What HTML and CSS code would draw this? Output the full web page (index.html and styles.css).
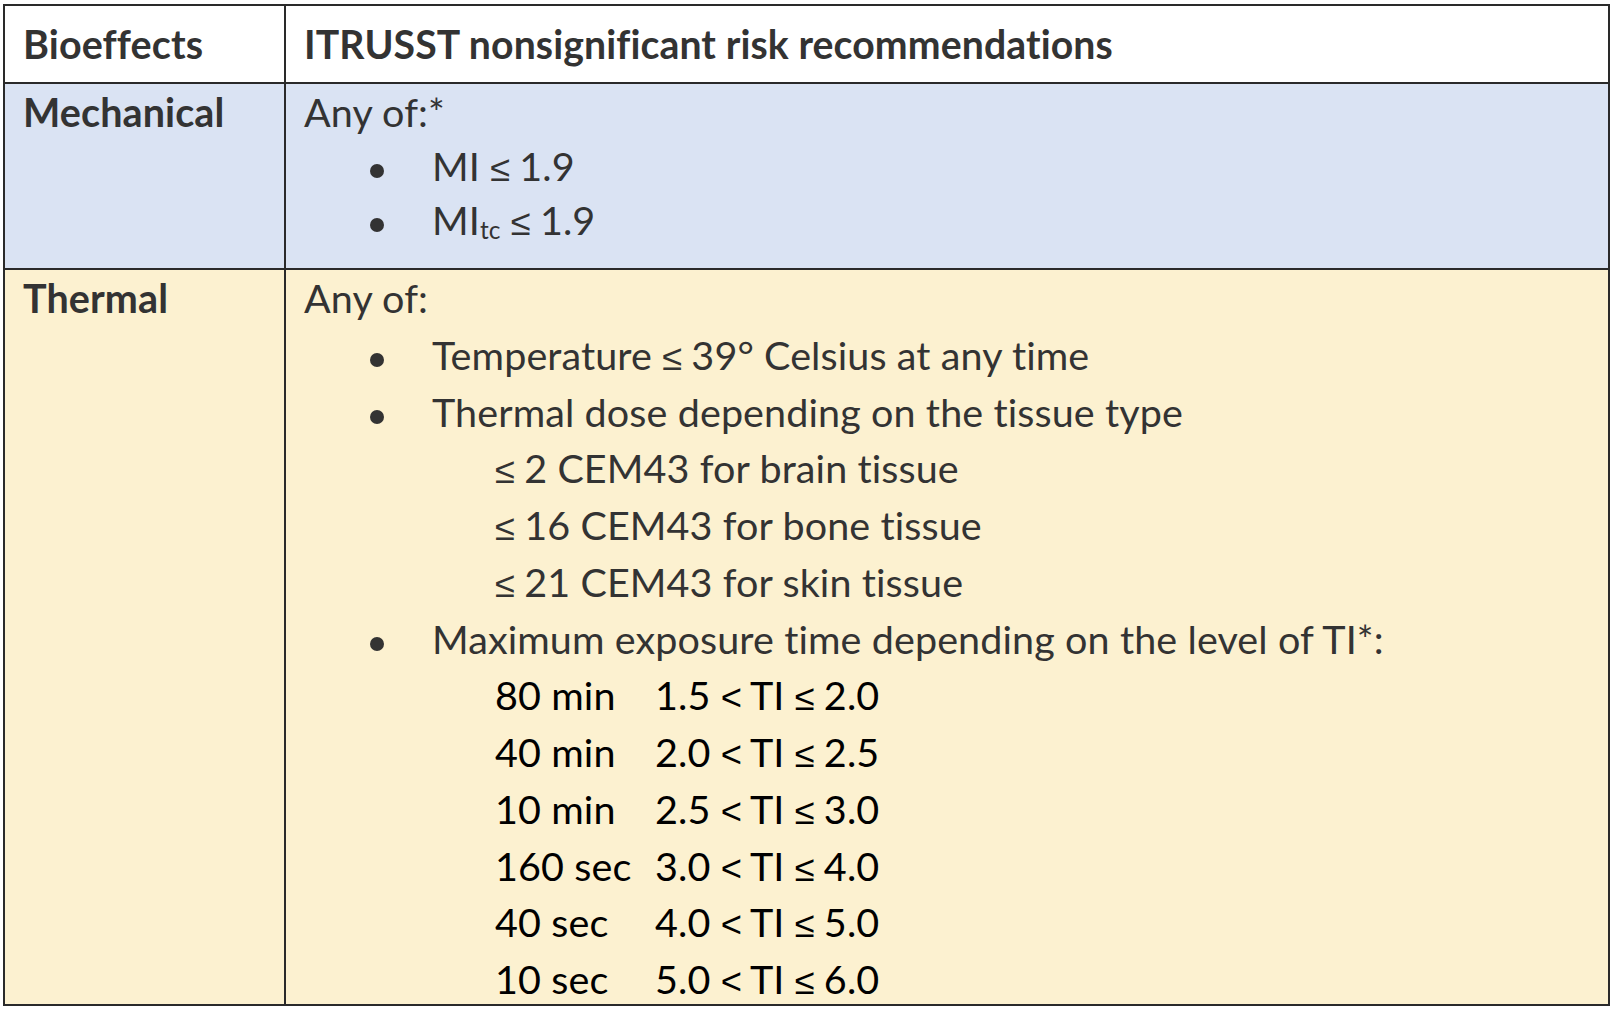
FILE: index.html
```html
<!DOCTYPE html>
<html lang="en">
<head>
<meta charset="utf-8">
<title>ITRUSST nonsignificant risk recommendations</title>
<link rel="stylesheet" href="styles.css">
</head>
<body>
<div class="table">
  <div class="cell label head">Bioeffects</div>
  <div class="cell content head">ITRUSST nonsignificant risk recommendations</div>

  <div class="cell label mech">Mechanical</div>
  <div class="cell content mech">
    <p class="lead">Any of:*</p>
    <ul class="bullets">
      <li>MI <span class="op">≤</span> 1.9</li>
      <li>MI<sub>tc</sub> <span class="op">≤</span> 1.9</li>
    </ul>
  </div>

  <div class="cell label thermal last">Thermal</div>
  <div class="cell content thermal last">
    <p class="lead">Any of:</p>
    <ul class="bullets">
      <li>Temperature <span class="op">≤</span> 39° Celsius at any time</li>
      <li>Thermal dose depending on the tissue type
        <div class="sub"><span class="op">≤</span> 2 CEM43 for brain tissue</div>
        <div class="sub"><span class="op">≤</span> 16 CEM43 for bone tissue</div>
        <div class="sub"><span class="op">≤</span> 21 CEM43 for skin tissue</div>
      </li>
      <li>Maximum exposure time depending on the level of TI*:
        <div class="ti">
          <span>80 min</span><span>1.5 <span class="op">&lt;</span> TI <span class="op">≤</span> 2.0</span>
          <span>40 min</span><span>2.0 <span class="op">&lt;</span> TI <span class="op">≤</span> 2.5</span>
          <span>10 min</span><span>2.5 <span class="op">&lt;</span> TI <span class="op">≤</span> 3.0</span>
          <span>160 sec</span><span>3.0 <span class="op">&lt;</span> TI <span class="op">≤</span> 4.0</span>
          <span>40 sec</span><span>4.0 <span class="op">&lt;</span> TI <span class="op">≤</span> 5.0</span>
          <span>10 sec</span><span>5.0 <span class="op">&lt;</span> TI <span class="op">≤</span> 6.0</span>
        </div>
      </li>
    </ul>
  </div>
</div>
</body>
</html>
```

FILE: styles.css
```css
html, body {
  margin: 0;
  padding: 0;
  background: #ffffff;
}

body {
  font-family: "Lato", "Liberation Sans", sans-serif;
  font-size: 39.5px;
  letter-spacing: 0.1px;
  color: #333333;
}

.table {
  box-sizing: border-box;
  width: 1607px;
  height: 1002px;
  margin: 4px 0 0 3px;
  border: 2px solid #2a2a2a;
  display: grid;
  grid-template-columns: 281px 1fr;
  grid-template-rows: 78px 186px 1fr;
}

.cell {
  box-sizing: border-box;
  border-bottom: 2px solid #2a2a2a;
  overflow: hidden;
}

.cell.last {
  border-bottom: none;
}

.label {
  border-right: 2px solid #2a2a2a;
  padding-left: 18px;
  font-weight: 700;
  font-size: 39.5px;
}

.content {
  padding-left: 18px;
}

.head {
  background: #ffffff;
  font-weight: 700;
  line-height: 76px;
}

.content.head {
  font-size: 39.2px;
}

.mech {
  background: #dae3f3;
  line-height: 54px;
  padding-top: 1px;
}

.thermal {
  background: #fcf1d0;
  line-height: 56.75px;
}

.lead {
  margin: 0;
}

.bullets {
  list-style: none;
  margin: 0 0 0 66px;
  padding: 0;
}

.bullets li {
  padding-left: 62px;
}

.bullets li::before {
  content: "";
  display: inline-block;
  width: 14px;
  height: 14px;
  border-radius: 50%;
  background: #333333;
  margin-left: -62px;
  margin-right: 48px;
  vertical-align: middle;
}

.op {
  font-family: "Liberation Sans", "Lato", sans-serif;
  font-size: 0.92em;
  line-height: 0;
  letter-spacing: -1px;
}

sub {
  font-size: 62%;
  vertical-align: -4px;
  line-height: 0;
}

.sub {
  padding-left: 63px;
}

.ti {
  display: grid;
  grid-template-columns: 160px auto;
  justify-content: start;
  padding-left: 63px;
  color: #000000;
}

.ti .op {
  color: #000000;
}
```
